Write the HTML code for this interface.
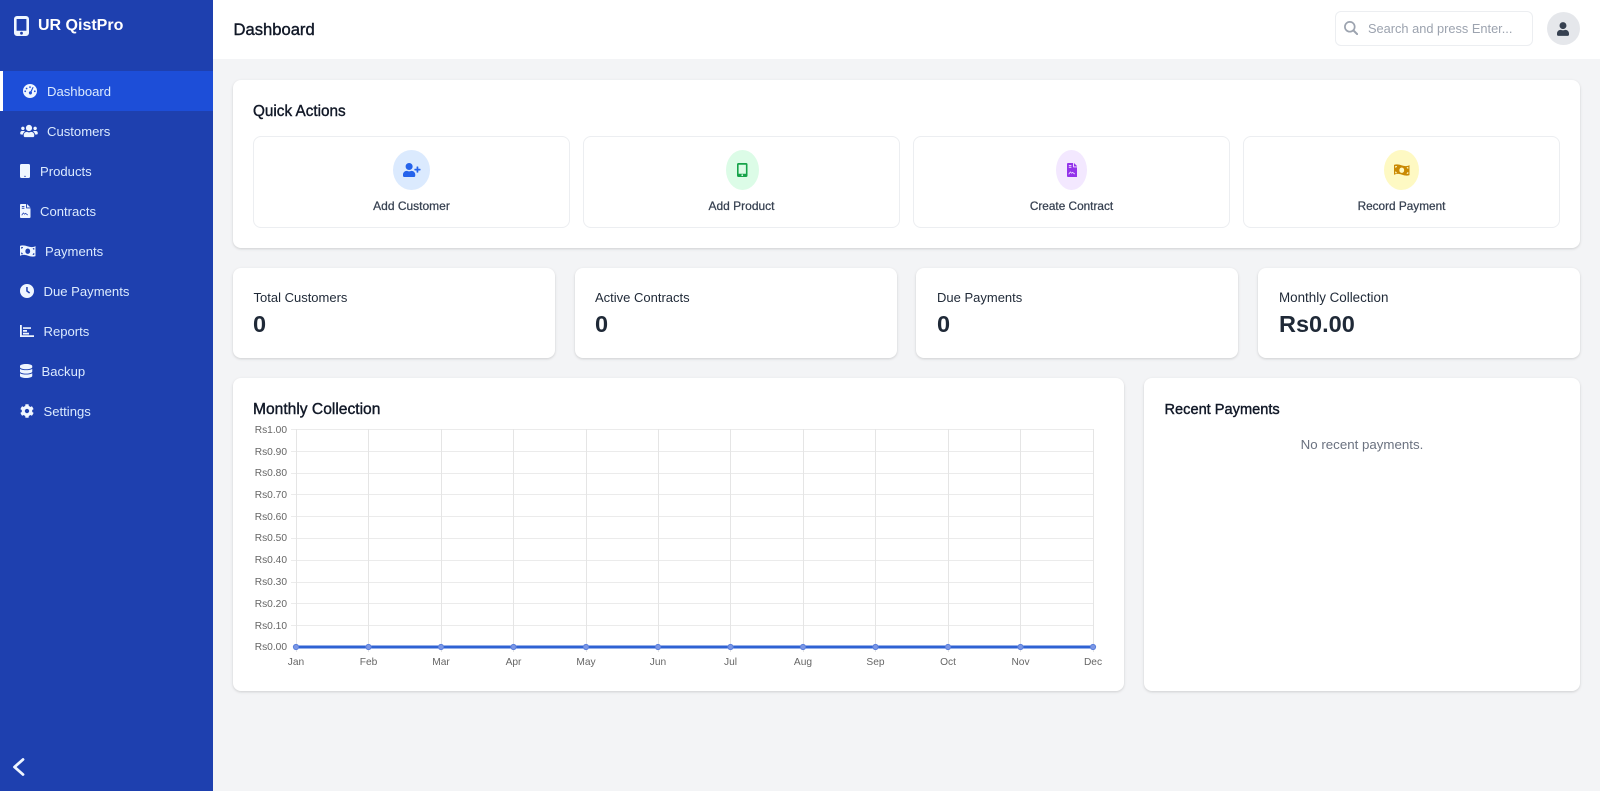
<!DOCTYPE html>
<html lang="en">
<head>
<meta charset="utf-8">
<title>UR QistPro</title>
<style>
*{box-sizing:border-box;margin:0;padding:0}
html,body{width:1600px;height:791px;overflow:hidden;background:#f3f4f6;font-family:"Liberation Sans",Arial,sans-serif;color:#111827}
.a{position:absolute}
#side{position:absolute;left:0;top:0;width:213px;height:791px;background:#1e40af}
#active{position:absolute;left:0;top:71px;width:213px;height:40px;background:#1d4ed8;border-left:3px solid #fff}
.nav{position:absolute;font-size:13.1px;line-height:20px;color:#dbeafe;white-space:nowrap}
.ic{position:absolute;fill:#eff6ff;overflow:visible}
#head{position:absolute;left:213px;top:0;width:1387px;height:59px;background:#fff}
.card{position:absolute;background:#fff;border-radius:8px;box-shadow:0 1px 3px rgba(0,0,0,.1),0 1px 2px rgba(0,0,0,.06)}
.qa{position:absolute;top:136px;height:92px;background:#fff;border:1px solid #eceef1;border-radius:8px}
.qc{position:absolute;top:150px;height:40px;border-radius:50%}
.ql{position:absolute;top:198px;font-size:12px;line-height:16px;color:#374151;text-align:center;white-space:nowrap;-webkit-text-stroke:.25px #374151}
.h{position:absolute;font-size:14.6px;line-height:20px;color:#111827;white-space:nowrap;-webkit-text-stroke:.4px #111827}
.sl{position:absolute;top:288px;font-size:13px;line-height:20px;color:#1f2937;white-space:nowrap}
.sv{position:absolute;top:309px;font-size:23.5px;line-height:30px;font-weight:700;color:#1f2937;white-space:nowrap}
</style>
</head>
<body>
<div id="side"></div>
<div id="active"></div>

<!-- logo -->
<svg class="ic" style="left:13.500px;top:16px" width="15" height="20" viewBox="0 0 15 20"><path fill-rule="evenodd" d="M3 0h9a3 3 0 0 1 3 3v14a3 3 0 0 1-3 3H3a3 3 0 0 1-3-3V3a3 3 0 0 1 3-3zM2.600 3v11.800h9.800V3zM7.500 15.800a1.400 1.400 0 1 0 0 2.800 1.400 1.400 0 0 0 0-2.800z"/></svg>
<div class="a" style="left:38px;top:15px;font-size:16px;line-height:22px;font-weight:700;color:#fff;white-space:nowrap">UR QistPro</div>

<!-- nav -->
<svg class="ic" style="left:23px;top:84px" width="14" height="14" viewBox="0 0 14 14"><path fill-rule="evenodd" d="M7 0a7 7 0 1 1 0 14A7 7 0 0 1 7 0zM7 2.200a.9.900 0 1 0 0 1.800.9.900 0 0 0 0-1.800zM3.600 3.600a.9.900 0 1 0 0 1.800.9.900 0 0 0 0-1.800zM2.200 6.400a.9.900 0 1 0 0 1.800.9.900 0 0 0 0-1.800zM11.800 6.400a.9.900 0 1 0 0 1.800.9.900 0 0 0 0-1.800zM9.600 3l-2 4.300a1.600 1.600 0 1 0 1 .5l2-4.400z"/></svg>
<div class="nav" style="left:47px;top:82px">Dashboard</div>

<svg class="ic" style="left:20px;top:124px" width="18" height="14" viewBox="0 0 640 512"><path d="M96 224c35.300 0 64-28.700 64-64s-28.700-64-64-64-64 28.700-64 64 28.700 64 64 64zm448 0c35.300 0 64-28.700 64-64s-28.700-64-64-64-64 28.700-64 64 28.700 64 64 64zm32 32h-64c-17.600 0-33.500 7.100-45.100 18.600 40.300 22.100 68.900 62 75.100 109.400h66c17.700 0 32-14.300 32-32v-32c0-35.300-28.700-64-64-64zm-256 0c61.900 0 112-50.100 112-112S381.900 32 320 32 208 82.100 208 144s50.100 112 112 112zm76.800 32h-8.300c-20.800 10-43.900 16-68.500 16s-47.600-6-68.500-16h-8.300C179.600 288 128 339.600 128 403.200V432c0 26.500 21.500 48 48 48h288c26.500 0 48-21.500 48-48v-28.800c0-63.600-51.600-115.200-115.200-115.200zm-223.700-13.400C161.500 263.100 145.600 256 128 256H64c-35.300 0-64 28.700-64 64v32c0 17.700 14.300 32 32 32h65.900c6.300-47.400 34.900-87.300 75.200-109.400z"/></svg>
<div class="nav" style="left:47px;top:122px">Customers</div>

<svg class="ic" style="left:20px;top:164px" width="10" height="14" viewBox="0 0 10 14"><path fill-rule="evenodd" d="M1.500 0h7A1.500 1.500 0 0 1 10 1.500v11A1.500 1.500 0 0 1 8.500 14h-7A1.500 1.500 0 0 1 0 12.500v-11A1.500 1.500 0 0 1 1.500 0zM5 11.700a.7.700 0 1 0 0 1.400.7.700 0 0 0 0-1.400z"/></svg>
<div class="nav" style="left:40px;top:162px">Products</div>

<svg class="ic" style="left:20px;top:204px" width="10.500" height="14" viewBox="0 0 10.500 14"><path fill-rule="evenodd" d="M6.100 0v3.700c0 .4.300.7.700.7h3.700v8.600c0 .6-.4 1-1 1H1c-.6 0-1-.4-1-1V1c0-.6.400-1 1-1zM7 0l3.500 3.500H7zM1.800 2v.9h2.600V2zM1.800 3.800v.9h2.600v-.9zM2 11.500l1.400-2 1.300 1.300.9-.9 1.900 1.500.5-.6-2.400-1.900-.9.900-1.400-1.400-1.900 2.600z"/></svg>
<div class="nav" style="left:40px;top:202px">Contracts</div>

<svg class="ic" style="left:20px;top:245px" width="15.500" height="12" viewBox="0 0 15.500 12"><path fill-rule="evenodd" d="M0 .9C2.500 0 5 .5 7.750 1.400 10.500 2.200 13 2.500 15.500 1.100v10C13 12 10.500 11.500 7.750 10.600 5 9.800 2.500 9.500 0 10.900zM7.750 3.500a2.400 2.700 0 1 0 0 5.400 2.400 2.700 0 0 0 0-5.400zM1.200 2v1.800a2 2 0 0 0 1.800-1.800zM12.600 3.200a2 2 0 0 0 1.700 1.500V3zM1.200 7.500v1.700h1.700A2 2 0 0 0 1.200 7.500zM14.300 8a2 2 0 0 0-1.600 2l1.600-.2z"/></svg>
<div class="nav" style="left:45px;top:242px">Payments</div>

<svg class="ic" style="left:20px;top:284px" width="14" height="14" viewBox="0 0 14 14"><path fill-rule="evenodd" d="M7 0a7 7 0 1 1 0 14A7 7 0 0 1 7 0zM6.200 3v4.400l3 2.200.9-1.200-2.400-1.800V3z"/></svg>
<div class="nav" style="left:43.500px;top:282px">Due Payments</div>

<svg class="ic" style="left:20px;top:325px" width="14" height="12" viewBox="0 0 14 12"><path d="M0 0h1.800v10.200H14V12H0zM3 7.800h6v1.700H3zM3 5h4v1.700H3zM3 2.200h8v1.700H3z"/></svg>
<div class="nav" style="left:43.500px;top:322px">Reports</div>

<svg class="ic" style="left:20px;top:364px" width="12.250" height="14" viewBox="0 0 448 512"><path d="M448 73.143v45.714C448 159.143 347.667 192 224 192S0 159.143 0 118.857V73.143C0 32.857 100.333 0 224 0s224 32.857 224 73.143zM448 176v102.857C448 319.143 347.667 352 224 352S0 319.143 0 278.857V176c48.125 33.143 136.208 48.572 224 48.572S399.874 209.143 448 176zm0 160v102.857C448 479.143 347.667 512 224 512S0 479.143 0 438.857V336c48.125 33.143 136.208 48.572 224 48.572S399.874 369.143 448 336z"/></svg>
<div class="nav" style="left:41.500px;top:362px">Backup</div>

<svg class="ic" style="left:20px;top:404px" width="14" height="14" viewBox="0 0 512 512"><path d="M487.400 315.700l-42.600-24.600c4.300-23.200 4.300-47 0-70.200l42.600-24.600c4.900-2.800 7.100-8.600 5.500-14-11.100-35.600-30-67.800-54.700-94.600-3.800-4.100-10-5.100-14.800-2.300L380.800 110c-17.900-15.400-38.500-27.300-60.800-35.100V25.800c0-5.600-3.900-10.500-9.400-11.700-36.700-8.200-74.300-7.800-109.200 0-5.500 1.200-9.400 6.100-9.400 11.700V75c-22.200 7.900-42.800 19.800-60.800 35.100L88.700 85.500c-4.900-2.800-11-1.900-14.800 2.300-24.700 26.700-43.600 58.900-54.700 94.600-1.700 5.400.6 11.200 5.500 14L67.300 221c-4.300 23.200-4.300 47 0 70.200l-42.600 24.600c-4.900 2.800-7.100 8.600-5.500 14 11.100 35.600 30 67.800 54.700 94.600 3.800 4.100 10 5.100 14.800 2.300l42.600-24.600c17.900 15.400 38.500 27.300 60.800 35.100v49.200c0 5.600 3.900 10.500 9.400 11.700 36.700 8.200 74.300 7.800 109.200 0 5.500-1.200 9.400-6.100 9.400-11.700v-49.200c22.200-7.900 42.800-19.800 60.800-35.100l42.600 24.600c4.900 2.800 11 1.900 14.800-2.300 24.700-26.700 43.600-58.900 54.700-94.600 1.500-5.500-.7-11.300-5.600-14.100zM256 336c-44.100 0-80-35.900-80-80s35.900-80 80-80 80 35.900 80 80-35.900 80-80 80z"/></svg>
<div class="nav" style="left:43.500px;top:402px">Settings</div>

<svg class="a" style="left:12px;top:758px" width="13" height="18" viewBox="0 0 13 18"><path d="M11 1.500L2.500 9l8.500 7.500" fill="none" stroke="#eff6ff" stroke-width="2.800" stroke-linecap="round" stroke-linejoin="round"/></svg>

<!-- header -->
<div id="head"></div>
<div class="a" style="left:233.500px;top:19px;font-size:16.600px;line-height:22px;color:#111827;white-space:nowrap;-webkit-text-stroke:.4px #111827">Dashboard</div>
<div class="a" style="left:1335px;top:11px;width:198px;height:35px;background:#fff;border:1px solid #eceef1;border-radius:6px"></div>
<svg class="a" style="left:1344px;top:21px" width="14" height="14" viewBox="0 0 14 14"><circle cx="5.800" cy="5.800" r="4.900" fill="none" stroke="#9ca3af" stroke-width="1.700"/><path d="M9.500 9.500l3.600 3.600" stroke="#9ca3af" stroke-width="2" stroke-linecap="round"/></svg>
<div class="a" style="left:1368px;top:19px;font-size:12.800px;line-height:20px;color:#9ca3af;white-space:nowrap">Search and press Enter...</div>
<div class="a" style="left:1547px;top:12px;width:33px;height:33px;border-radius:50%;background:#e5e7eb"></div>
<svg class="a" style="left:1557px;top:22px" width="12" height="14" viewBox="0 0 448 512"><path fill="#374151" d="M224 256c70.700 0 128-57.300 128-128S294.700 0 224 0 96 57.300 96 128s57.300 128 128 128zm89.600 32h-16.700c-22.200 10.200-46.900 16-72.900 16s-50.600-5.800-72.900-16h-16.700C60.200 288 0 348.200 0 422.400V464c0 26.500 21.500 48 48 48h352c26.500 0 48-21.500 48-48v-41.600c0-74.200-60.200-134.400-134.400-134.400z"/></svg>

<!-- quick actions -->
<div class="card" style="left:233px;top:80px;width:1347px;height:168px"></div>
<div class="h" style="left:253px;top:101.500px;font-size:15.300px">Quick Actions</div>

<div class="qa" style="left:253px;width:317px"></div>
<div class="qa" style="left:583px;width:317px"></div>
<div class="qa" style="left:913px;width:317px"></div>
<div class="qa" style="left:1243px;width:317px"></div>

<div class="qc" style="left:393px;width:37px;background:#dbeafe"></div>
<svg class="a" style="left:403px;top:163px" width="17.500" height="14" viewBox="0 0 640 512"><path fill="#2563eb" d="M624 208h-64v-64c0-8.800-7.200-16-16-16h-32c-8.800 0-16 7.200-16 16v64h-64c-8.800 0-16 7.200-16 16v32c0 8.800 7.200 16 16 16h64v64c0 8.800 7.200 16 16 16h32c8.800 0 16-7.200 16-16v-64h64c8.800 0 16-7.200 16-16v-32c0-8.800-7.200-16-16-16zm-400 48c70.700 0 128-57.300 128-128S294.700 0 224 0 96 57.300 96 128s57.300 128 128 128zm89.600 32h-16.700c-22.200 10.200-46.900 16-72.900 16s-50.600-5.800-72.900-16h-16.700C60.200 288 0 348.200 0 422.400V464c0 26.500 21.500 48 48 48h352c26.500 0 48-21.500 48-48v-41.600c0-74.200-60.200-134.400-134.400-134.400z"/></svg>
<div class="ql" style="left:253px;width:317px">Add Customer</div>

<div class="qc" style="left:726px;width:33px;background:#dcfce7"></div>
<svg class="a" style="left:737px;top:163px" width="10.500" height="14" viewBox="0 0 10.500 14"><path fill="#16a34a" fill-rule="evenodd" d="M1.500 0h7.500A1.500 1.500 0 0 1 10.500 1.500v11A1.500 1.500 0 0 1 9 14H1.500A1.500 1.500 0 0 1 0 12.500v-11A1.500 1.500 0 0 1 1.500 0zM1.600 1.800v8.900h7.300V1.800zM5.250 11.300a.9.900 0 1 0 0 1.800.9.900 0 0 0 0-1.800z"/></svg>
<div class="ql" style="left:583px;width:317px">Add Product</div>

<div class="qc" style="left:1056px;width:31px;background:#f3e8ff"></div>
<svg class="a" style="left:1066.500px;top:163px" width="10.500" height="14" viewBox="0 0 10.500 14"><path fill="#9333ea" fill-rule="evenodd" d="M6.100 0v3.700c0 .4.300.7.700.7h3.700v8.600c0 .6-.4 1-1 1H1c-.6 0-1-.4-1-1V1c0-.6.400-1 1-1zM7 0l3.500 3.500H7zM1.800 2v.9h2.600V2zM1.800 3.800v.9h2.600v-.9zM2 11.500l1.400-2 1.300 1.300.9-.9 1.900 1.500.5-.6-2.400-1.900-.9.900-1.400-1.400-1.900 2.600z"/></svg>
<div class="ql" style="left:913px;width:317px;font-size:11.800px">Create Contract</div>

<div class="qc" style="left:1384px;width:35px;background:#fef9c3"></div>
<svg class="a" style="left:1394px;top:164px" width="15.500" height="12" viewBox="0 0 15.500 12"><path fill="#ca8a04" fill-rule="evenodd" d="M0 .9C2.500 0 5 .5 7.750 1.400 10.500 2.200 13 2.500 15.500 1.100v10C13 12 10.500 11.500 7.750 10.600 5 9.800 2.500 9.500 0 10.900zM7.750 3.500a2.400 2.700 0 1 0 0 5.400 2.400 2.700 0 0 0 0-5.400zM1.200 2v1.800a2 2 0 0 0 1.800-1.800zM12.600 3.200a2 2 0 0 0 1.700 1.500V3zM1.200 7.500v1.700h1.700A2 2 0 0 0 1.200 7.500zM14.300 8a2 2 0 0 0-1.600 2l1.600-.2z"/></svg>
<div class="ql" style="left:1243px;width:317px;font-size:11.800px">Record Payment</div>

<!-- stats -->
<div class="card" style="left:233px;top:268px;width:322px;height:90px"></div>
<div class="card" style="left:575px;top:268px;width:322px;height:90px"></div>
<div class="card" style="left:916px;top:268px;width:322px;height:90px"></div>
<div class="card" style="left:1258px;top:268px;width:322px;height:90px"></div>
<div class="sl" style="left:253.500px">Total Customers</div><div class="sv" style="left:253px">0</div>
<div class="sl" style="left:595px">Active Contracts</div><div class="sv" style="left:595px">0</div>
<div class="sl" style="left:937px">Due Payments</div><div class="sv" style="left:937px">0</div>
<div class="sl" style="left:1279px;font-size:13.400px">Monthly Collection</div><div class="sv" style="left:1279px">Rs0.00</div>

<!-- chart -->
<div class="card" style="left:233px;top:378px;width:891px;height:313px"></div>
<div class="card" style="left:1144px;top:378px;width:436px;height:313px"></div>
<div class="h" style="left:253px;top:400px;font-size:15.600px">Monthly Collection</div>
<div class="h" style="left:1164.500px;top:400px">Recent Payments</div>
<div class="a" style="left:1144px;top:435px;width:436px;text-align:center;font-size:13.300px;line-height:20px;color:#6b7280">No recent payments.</div>

<svg class="a" style="left:233px;top:420px" width="891" height="260" viewBox="233 420 891 260" font-family="Liberation Sans, Arial, sans-serif" font-size="10.200" fill="#666">
<g stroke="#ebebeb" stroke-width="1" fill="none">
<path d="M291 429.500H1093M291 451.500H1093M291 473.500H1093M291 494.500H1093M291 516.500H1093M291 538.500H1093M291 560.500H1093M291 582.500H1093M291 603.500H1093M291 625.500H1093"/>
</g>
<g stroke="#e5e5e5" stroke-width="1" fill="none">
<path d="M296.500 429V652M368.500 429V652M441.500 429V652M513.500 429V652M586.500 429V652M658.500 429V652M730.500 429V652M803.500 429V652M875.500 429V652M948.500 429V652M1020.500 429V652M1093.500 429V652"/>
</g>
<g text-anchor="end">
<text x="287" y="433">Rs1.00</text><text x="287" y="455">Rs0.90</text><text x="287" y="476">Rs0.80</text><text x="287" y="498">Rs0.70</text><text x="287" y="520">Rs0.60</text><text x="287" y="541">Rs0.50</text><text x="287" y="563">Rs0.40</text><text x="287" y="585">Rs0.30</text><text x="287" y="607">Rs0.20</text><text x="287" y="629">Rs0.10</text><text x="287" y="650">Rs0.00</text>
</g>
<g text-anchor="middle">
<text x="296" y="665">Jan</text><text x="368.500" y="665">Feb</text><text x="441" y="665">Mar</text><text x="513.500" y="665">Apr</text><text x="586" y="665">May</text><text x="658" y="665">Jun</text><text x="730.500" y="665">Jul</text><text x="803" y="665">Aug</text><text x="875.500" y="665">Sep</text><text x="948" y="665">Oct</text><text x="1020.500" y="665">Nov</text><text x="1093" y="665">Dec</text>
</g>
<path d="M296 647H1093" stroke="#2f62d3" stroke-width="3"/>
<g fill="#7b96e4" stroke="#5a7fdc" stroke-width="1">
<circle cx="296" cy="647" r="2.600"/><circle cx="368.500" cy="647" r="2.600"/><circle cx="441" cy="647" r="2.600"/><circle cx="513.500" cy="647" r="2.600"/><circle cx="586" cy="647" r="2.600"/><circle cx="658" cy="647" r="2.600"/><circle cx="730.500" cy="647" r="2.600"/><circle cx="803" cy="647" r="2.600"/><circle cx="875.500" cy="647" r="2.600"/><circle cx="948" cy="647" r="2.600"/><circle cx="1020.500" cy="647" r="2.600"/><circle cx="1093" cy="647" r="2.600"/>
</g>
</svg>
</body>
</html>
